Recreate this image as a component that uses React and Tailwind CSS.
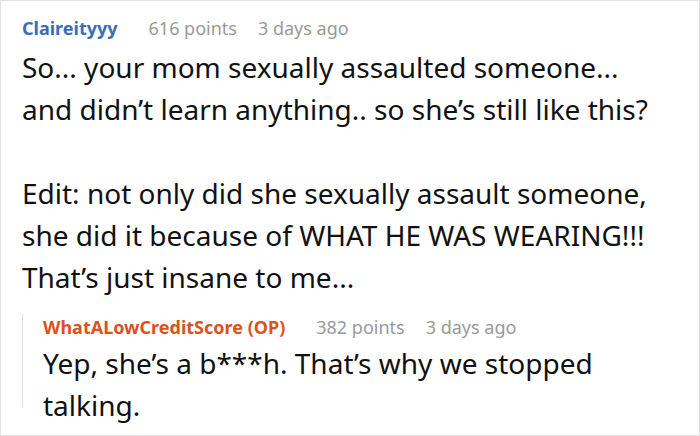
export default function App() {
  return (
    <div className="w-[700px] h-[436px] bg-white border border-[#e2e2e2] overflow-hidden font-['Noto_Sans',sans-serif]">
      <div className="pl-[21px] pt-[14px]">
        <div className="flex items-baseline text-[18px] leading-[26px]">
          <span className="font-bold text-[#3b6cb8]">Claireityyy</span>
          <span className="ml-[31px] text-[#999999]">616 points</span>
          <span className="ml-[21px] text-[#999999]">3 days ago</span>
        </div>
        <div className="mt-[5px] text-[28px] leading-[42px] text-[#111111]">
          <p>So... your mom sexually assaulted someone...</p>
          <p>and didn’t learn anything.. so she’s still like this?</p>
          <p>&nbsp;</p>
          <p>Edit: not only did she sexually assault someone,</p>
          <p>she did it because of WHAT HE WAS WEARING!!!</p>
          <p>That’s just insane to me...</p>
        </div>
        <div className="mt-[27px] h-[93px] border-l border-[#e0e0e0] pl-[20px]">
          <div className="-mt-[11px] flex items-baseline text-[18px] leading-[26px]">
            <span className="font-bold text-[#d9531e]">WhatALowCreditScore (OP)</span>
            <span className="ml-[31px] text-[#999999]">382 points</span>
            <span className="ml-[21px] text-[#999999]">3 days ago</span>
          </div>
          <div className="mt-[2px] text-[28px] leading-[42px] text-[#111111]">
            <p>Yep, she’s a b***h. That’s why we stopped</p>
            <p>talking.</p>
          </div>
        </div>
      </div>
    </div>
  );
}
